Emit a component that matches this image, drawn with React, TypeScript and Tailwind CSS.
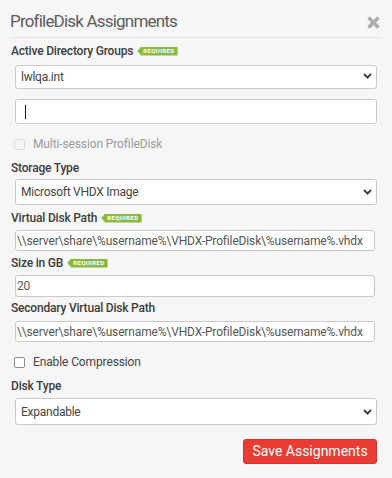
import React from "react";

const PATH = "\\\\server\\share\\%username%\\VHDX-ProfileDisk\\%username%.vhdx";

function Required() {
  return (
    <span className="ml-[4px] inline-flex h-[9px] items-center bg-[#8bb83f] pl-[6px] pr-[3px] text-[6px] font-bold leading-none tracking-[0.4px] text-white [clip-path:polygon(4px_0,100%_0,100%_100%,4px_100%,0_50%)]">
      REQUIRED
    </span>
  );
}

function Label({ text, required, className }: { text: string; required?: boolean; className: string }) {
  return (
    <div className={"ml-[11px] flex h-[14px] items-center text-[12px] font-medium leading-[14px] tracking-[-0.2px] text-[#3d3d3d] " + className}>
      {text}
      {required && <Required />}
    </div>
  );
}

function Chevron() {
  return (
    <svg width="9" height="6" viewBox="0 0 9 6" className="pointer-events-none absolute right-[5px] top-1/2 -translate-y-1/2">
      <path d="M1 1 L4.5 4.5 L8 1" fill="none" stroke="#444" strokeWidth="2" />
    </svg>
  );
}

function Select({ value, className }: { value: string; className: string }) {
  return (
    <div className={"relative mx-[15px] " + className}>
      <select
        value={value}
        onChange={() => {}}
        className="h-full w-full appearance-none rounded-[3px] border border-[#c9c9c9] bg-white pl-[5px] text-[12px] tracking-[-0.25px] text-[#444] outline-none"
      >
        <option>{value}</option>
      </select>
      <Chevron />
    </div>
  );
}

function TextField({ value, className }: { value: string; className: string }) {
  return (
    <input
      readOnly
      value={value}
      className={"mx-[15px] block w-[360px] rounded-[3px] border border-[#c9c9c9] bg-white px-[1px] text-[12px] tracking-[-0.15px] text-[#555] outline-none " + className}
    />
  );
}

function Check({ text, disabled, className }: { text: string; disabled?: boolean; className: string }) {
  return (
    <div className={"ml-[14px] flex h-[14px] items-center " + className}>
      <span
        className={
          "h-[11px] w-[11px] rounded-[2px] border " +
          (disabled ? "border-[#dcdcdc] bg-[#f4f4f4]" : "border-[#8a8a8a] bg-white")
        }
      />
      <span className={"ml-[8px] text-[12px] tracking-[-0.12px] " + (disabled ? "text-[#9a9a9a]" : "text-[#444]")}>{text}</span>
    </div>
  );
}

export default function App() {
  return (
    <div className="flex h-[478px] w-[392px] flex-col bg-[#f6f6f6] font-['Roboto',sans-serif]">
      <div className="mx-[10px] flex h-[38px] items-center justify-between border-b border-[#e2e2e2] pt-[5px]">
        <span className="text-[17px] leading-none tracking-[-0.8px] text-[#5c5c5c]">ProfileDisk Assignments</span>
        <svg width="15" height="15" viewBox="0 0 15 15" className="mr-[1px] mt-[3px]">
          <path d="M2.5 2.5 L12.5 12.5 M12.5 2.5 L2.5 12.5" stroke="#adadad" strokeWidth="3.6" />
        </svg>
      </div>

      <Label text="Active Directory Groups" required className="mt-[6px]" />
      <Select value="lwlqa.int" className="mt-[6px] h-[24px]" />
      <div className="mx-[15px] mt-[11px] flex h-[25px] items-center rounded-[3px] border border-[#c9c9c9] bg-white pl-[9px]">
        <span className="h-[14px] w-px bg-[#111]" />
      </div>
      <Check text="Multi-session ProfileDisk" disabled className="mt-[13px]" />

      <Label text="Storage Type" className="mt-[10px]" />
      <Select value="Microsoft VHDX Image" className="mt-[4px] h-[26px]" />

      <Label text="Virtual Disk Path" required className="mt-[6px]" />
      <TextField value={PATH} className="mt-[5px] h-[21px]" />

      <Label text="Size in GB" required className="mt-[5px]" />
      <TextField value="20" className="mt-[5px] h-[22px]" />

      <Label text="Secondary Virtual Disk Path" className="mt-[4px]" />
      <TextField value={PATH} className="mt-[6px] h-[21px]" />

      <Check text="Enable Compression" className="mt-[13px]" />

      <Label text="Disk Type" className="mt-[10px]" />
      <Select value="Expandable" className="mt-[5px] h-[27px]" />

      <button className="mr-[15px] mt-[14px] h-[25px] w-[134px] self-end rounded-[3px] border border-[#d8322c] bg-[#e93d33] text-[14px] text-white">
        Save Assignments
      </button>
    </div>
  );
}
